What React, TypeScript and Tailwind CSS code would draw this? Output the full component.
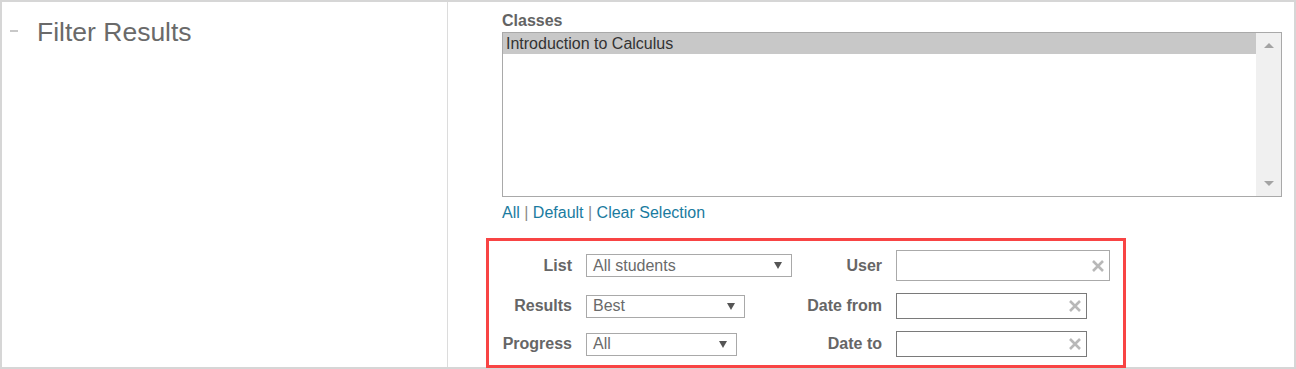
import React from "react";

function Caret({ className = "" }: { className?: string }) {
  return (
    <svg width="8" height="7" viewBox="0 0 8 7" className={className}>
      <polygon points="0,0 8,0 4,7" fill="#555555" />
    </svg>
  );
}

function ClearX() {
  return (
    <svg width="12" height="12" viewBox="0 0 12 12">
      <path d="M1 1 L11 11 M11 1 L1 11" stroke="#b8b8b8" strokeWidth="2.6" />
    </svg>
  );
}

function Select({ value, w }: { value: string; w: string }) {
  return (
    <div
      className={`${w} h-[23px] self-center border border-[#a9a9a9] bg-white flex items-center justify-between pl-[6px] pr-[9px] text-[16px] leading-[20px] text-[#6a6a6a]`}
    >
      <span>{value}</span>
      <Caret />
    </div>
  );
}

function Label({ children }: { children: React.ReactNode }) {
  return (
    <div className="self-center text-right font-bold text-[16px] leading-[20px] text-[#666666] whitespace-nowrap">
      {children}
    </div>
  );
}

export default function App() {
  return (
    <div className="w-[1296px] h-[369px] bg-white font-['Liberation_Sans',Arial,sans-serif]">
      <div className="w-[1296px] h-[369px] border-2 border-[#d6d6d6] flex">
        <div className="w-[446px] shrink-0 border-r border-[#dcdcdc] flex items-start pl-[8px] pt-[14px]">
          <div className="w-[8px] h-[2px] bg-[#c8c8c8] mt-[14px]" />
          <div className="ml-[19px] text-[26.5px] leading-[32px] text-[#6a6a6a]">
            Filter Results
          </div>
        </div>
        <div className="flex-1 pl-[54px] pr-[12px] pt-[10px]">
          <div className="font-bold text-[16px] leading-[18px] text-[#636363]">Classes</div>
          <div className="mt-[2px] h-[165px] border border-[#a9a9a9] flex">
            <div className="flex-1">
              <div className="h-[21px] bg-[#c8c8c8] pl-[3px] text-[16px] leading-[21px] text-[#333333]">
                Introduction to Calculus
              </div>
            </div>
            <div className="w-[25px] bg-[#f0f0f0] flex flex-col items-center justify-between py-[10px]">
              <svg width="10" height="5" viewBox="0 0 10 5">
                <polygon points="0,5 10,5 5,0" fill="#a3a3a3" />
              </svg>
              <svg width="10" height="5" viewBox="0 0 10 5">
                <polygon points="0,0 10,0 5,5" fill="#a3a3a3" />
              </svg>
            </div>
          </div>
          <div className="mt-[6px] text-[16px] leading-[20px] text-[#888888]">
            <span className="text-[#1a7ba0]">All</span> |{" "}
            <span className="text-[#1a7ba0]">Default</span> |{" "}
            <span className="text-[#1a7ba0]">Clear Selection</span>
          </div>
          <div className="relative mt-[15px] -ml-[16px] w-[640px] h-[130px] pt-[12px]">
            <div className="grid grid-cols-[86px_206px_76px_214px] grid-rows-[31px_26px_26px] gap-x-[14px] gap-y-[12px]">
              <Label>List</Label>
              <Select value="All students" w="w-[206px]" />
              <Label>User</Label>
              <div className="w-[214px] h-[31px] border border-[#aaaaaa] flex items-center justify-end pr-[5px]">
                <ClearX />
              </div>

              <Label>Results</Label>
              <Select value="Best" w="w-[159px]" />
              <Label>Date from</Label>
              <div className="w-[191px] h-[26px] border border-[#7a7a7a] flex items-center justify-end pr-[5px]">
                <ClearX />
              </div>

              <Label>Progress</Label>
              <Select value="All" w="w-[151px]" />
              <Label>Date to</Label>
              <div className="w-[191px] h-[26px] border border-[#7a7a7a] flex items-center justify-end pr-[5px]">
                <ClearX />
              </div>
            </div>
            <div className="absolute inset-0 border-[3px] border-[#f84444] pointer-events-none" />
          </div>
        </div>
      </div>
    </div>
  );
}
